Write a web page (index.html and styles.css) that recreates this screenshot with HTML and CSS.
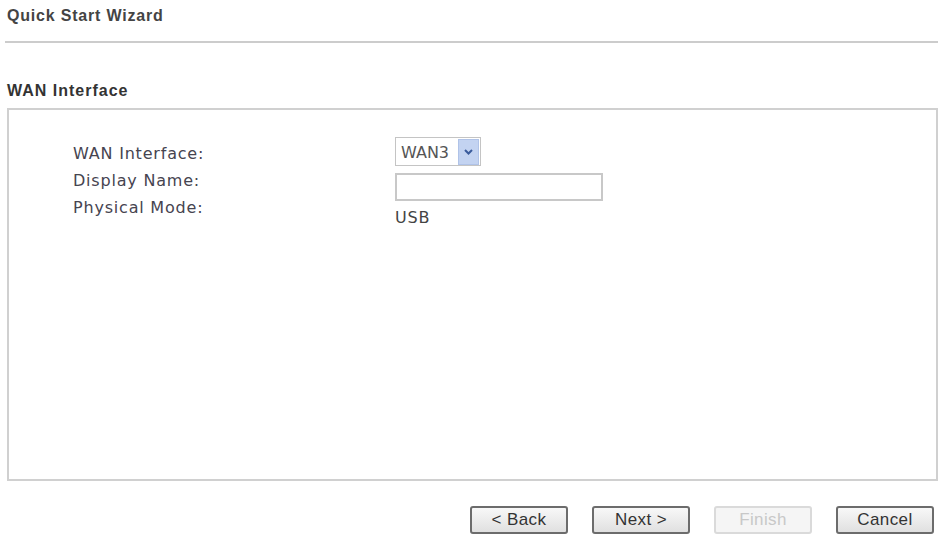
FILE: index.html
```html
<!DOCTYPE html>
<html lang="en">
<head>
    <meta charset="UTF-8">
    <title>Quick Start Wizard</title>
    <link rel="stylesheet" href="styles.css">
</head>
<body>
    <div class="page-title">Quick Start Wizard</div>

    <div class="section-title">WAN Interface</div>
    <div class="panel">
        <div class="labels">
            <label for="wan-select">WAN Interface:</label>
            <label for="display-name">Display Name:</label>
            <label>Physical Mode:</label>
        </div>
        <div class="fields">
            <div class="select" id="wan-select">
                <span class="select-value">WAN3</span>
                <span class="select-arrow">
                    <svg width="9" height="6" viewBox="0 0 9 6"><path d="M1 1 L4.5 4.5 L8 1" fill="none" stroke="#3a5b9c" stroke-width="2"/></svg>
                </span>
            </div>
            <input type="text" id="display-name">
            <span class="value">USB</span>
        </div>
    </div>

    <div class="buttons">
        <button>&lt; Back</button>
        <button>Next &gt;</button>
        <button disabled>Finish</button>
        <button>Cancel</button>
    </div>
</body>
</html>
```

FILE: styles.css
```css
*{
    margin: 0px;
    padding: 0px;
    box-sizing: border-box;
}

body{
    background: #fff;
    font-family: "Liberation Sans", Arial, sans-serif;
    color: #333;
    padding: 0 4px 0 5px;
}

.page-title{
    font-size: 16px;
    font-weight: bold;
    letter-spacing: 0.8px;
    color: #444;
    padding: 7px 0 0 2px;
    height: 43px;
    border-bottom: 2px solid #ccc;
}

.section-title{
    font-size: 16px;
    font-weight: bold;
    letter-spacing: 1px;
    color: #333;
    margin-top: 39px;
    padding-left: 2px;
    height: 26px;
}

.panel{
    margin-left: 2px;
    height: 373px;
    border: 2px solid #d0d0d0;
    padding: 27px 0 0 64px;
    display: flex;
}

.labels{
    width: 322px;
    display: flex;
    flex-direction: column;
    padding-top: 7px;
    gap: 7px;
}

.labels label{
    font-family: "DejaVu Sans", Verdana, sans-serif;
    font-size: 16px;
    letter-spacing: 0.8px;
    line-height: 20px;
    color: #464450;
}

.fields{
    display: flex;
    flex-direction: column;
    align-items: flex-start;
    gap: 7px;
}

.select{
    display: flex;
    align-items: center;
    width: 86px;
    height: 29px;
    border: 1px solid #c4c4c4;
    padding: 1px 1px 0 2px;
}

.select-value{
    flex: 1;
    font-family: "DejaVu Sans", Verdana, sans-serif;
    font-size: 16px;
    color: #555;
    padding-left: 3px;
}

.select-arrow{
    width: 21px;
    height: 26px;
    background: #c3d3f1;
    border: 1px solid #b0c3e8;
    display: flex;
    align-items: center;
    justify-content: center;
}

.fields input{
    width: 208px;
    height: 28px;
    border: 2px solid #c8c8c8;
    outline: none;
}

.value{
    font-family: "DejaVu Sans", Verdana, sans-serif;
    font-size: 16px;
    letter-spacing: 0.8px;
    line-height: 20px;
    color: #444;
}

.buttons{
    display: flex;
    justify-content: flex-end;
    gap: 24px;
    padding: 25px 4px 0 0;
}

.buttons button{
    width: 98px;
    height: 28px;
    border: 2px solid #6c6c6c;
    border-radius: 3px;
    background: linear-gradient(#f8f8f8, #e0e0e0);
    font-family: "Liberation Sans", Arial, sans-serif;
    font-size: 17px;
    letter-spacing: 0.4px;
    color: #333;
}

.buttons button:disabled{
    border-color: #dadada;
    background: #f5f5f5;
    color: #c8c8c8;
}
```
